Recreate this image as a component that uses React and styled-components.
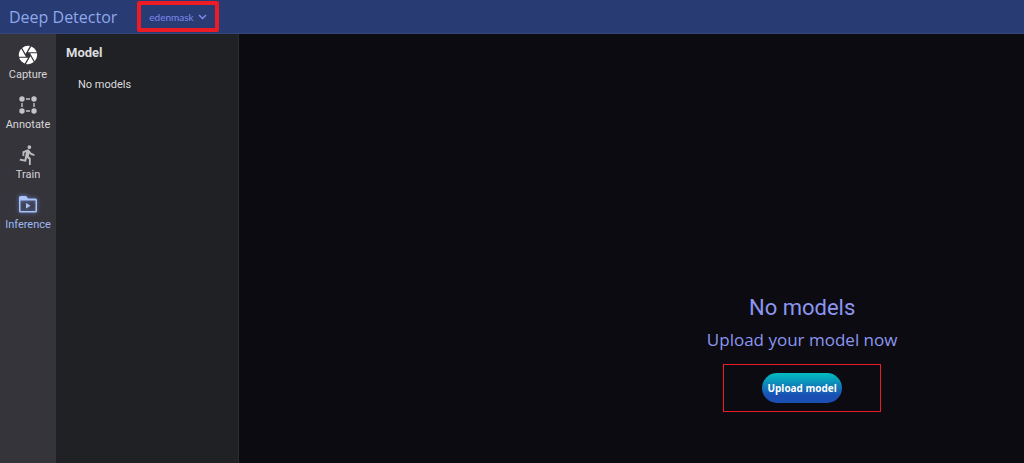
import React from "react";
import styled, { createGlobalStyle } from "styled-components";
import { MdCamera, MdDirectionsRun } from "react-icons/md";

const GlobalStyle = createGlobalStyle`
  * {
    box-sizing: border-box;
  }
  body {
    margin: 0;
    background-color: #0b0b11;
    font-family: "Open Sans", "Noto Sans", sans-serif;
  }
`;
const Page = styled.div`
  display: flex;
  flex-direction: column;
  min-height: 100vh;
`;
const Header = styled.header`
  display: flex;
  align-items: center;
  gap: 20px;
  height: 34px;
  padding-left: 9px;
  background-color: #293b73;
  border-bottom: 1px solid #33457c;
`;
const Logo = styled.h1`
  margin: 0;
  color: #8fa8ea;
  font-size: 16px;
  line-height: 24px;
  font-weight: normal;
`;
const Project = styled.label`
  display: flex;
  align-items: center;
  height: 31px;
  padding: 0 8px;
  color: #8088ee;
  border: 4px solid #ed1c24;
  border-radius: 2px;
`;
const Select = styled.select`
  appearance: none;
  width: 49px;
  padding: 0;
  color: inherit;
  background: none;
  border: none;
  outline: none;
  font-family: Lato, sans-serif;
  font-size: 10px;
  line-height: 16px;
`;
const Body = styled.div`
  display: flex;
  flex: 1;
`;
const Nav = styled.nav`
  display: flex;
  flex-direction: column;
  gap: 10px;
  width: 56px;
  padding-top: 10px;
  background-color: #35343a;
`;
const NavLink = styled.a`
  display: flex;
  flex-direction: column;
  align-items: center;
  color: ${props => props.$active ? "#9db8f5" : "#d6d6d8"};
  font-family: Roboto, sans-serif;
  font-size: 11px;
  line-height: 18px;
  text-decoration: none;
  svg {
    width: 22px;
    height: 22px;
    color: ${props => props.$icon};
    filter: ${props => props.$active ? "drop-shadow(0 0 2px #6d8be0)" : "none"};
  }
`;
const Sidebar = styled.aside`
  width: 183px;
  padding: 10px;
  color: #dcdcde;
  background-color: #202124;
  border-right: 1px solid #2c2c30;
`;
const SidebarTitle = styled.h2`
  margin: 0;
  font-family: Roboto, sans-serif;
  font-size: 13px;
  line-height: 18px;
  font-weight: bold;
`;
const Empty = styled.p`
  margin: 14px 0 0;
  padding-left: 12px;
  font-family: Roboto, sans-serif;
  font-size: 11px;
  line-height: 18px;
`;
const Main = styled.main`
  display: flex;
  flex: 1;
  flex-direction: column;
  align-items: center;
  padding: 258px 0 50px 33.33%;
  color: #8c96f0;
`;
const Title = styled.h2`
  margin: 0;
  font-family: Roboto, sans-serif;
  font-size: 22px;
  line-height: 32px;
  font-weight: normal;
`;
const Subtitle = styled.p`
  margin: 4px 0 12px;
  font-size: 17px;
  line-height: 24px;
`;
const Highlight = styled.div`
  padding: 8px 38px;
  border: 1px solid #ed1c24;
`;
const Button = styled.button`
  display: block;
  width: 80px;
  height: 30px;
  padding: 0;
  color: #fff;
  background: linear-gradient(#00bfc0, #1a4fb4 75%);
  border: none;
  border-radius: 15px;
  font-family: inherit;
  font-size: 10px;
  font-weight: bold;
  white-space: nowrap;
`;

const Chevron = () => (
    <svg width="9" height="6" viewBox="0 0 9 6" fill="none" stroke="currentColor" strokeWidth="1.5">
        <path d="M1 1l3.5 3.5L8 1"/>
    </svg>
);
const AnnotateIcon = () => (
    <svg viewBox="0 0 22 22" fill="currentColor">
        <circle cx="5" cy="5" r="2.7"/>
        <circle cx="17" cy="5" r="2.7"/>
        <circle cx="5" cy="17" r="2.7"/>
        <circle cx="17" cy="17" r="2.7"/>
        <path d="M9 4.3h4v1.4H9zM9 16.3h4v1.4H9zM4.3 9h1.4v4H4.3zM16.3 9h1.4v4h-1.4z"/>
    </svg>
);
const InferenceIcon = () => (
    <svg viewBox="0 0 22 22" fill="currentColor">
        <path fillRule="evenodd" d="M3.5 2H9l2 2.5h7.5A1.5 1.5 0 0 1 20 6v11a1.5 1.5 0 0 1-1.5 1.5h-15A1.5 1.5 0 0 1 2 17V3.5A1.5 1.5 0 0 1 3.5 2zM3.5 6.5V17h15V6.5z"/>
        <path d="M9 9v5.4l4.6-2.7z"/>
    </svg>
);

const links = [
    { name: "Capture", icon: <MdCamera/>, color: "#fff" },
    { name: "Annotate", icon: <AnnotateIcon/>, color: "#c4c4c8" },
    { name: "Train", icon: <MdDirectionsRun/>, color: "#bdbdc0" },
    { name: "Inference", icon: <InferenceIcon/>, color: "#a9c2f7", active: true }
];

const App = () => {
    return(
        <Page>
            <GlobalStyle/>
            <Header>
                <Logo>Deep Detector</Logo>
                <Project>
                    <Select aria-label="Project">
                        <option>edenmask</option>
                    </Select>
                    <Chevron/>
                </Project>
            </Header>
            <Body>
                <Nav>
                    {links.map(link => (
                        <NavLink key={link.name} href={"#" + link.name.toLowerCase()} $icon={link.color} $active={link.active}>
                            {link.icon}
                            {link.name}
                        </NavLink>
                    ))}
                </Nav>
                <Sidebar>
                    <SidebarTitle>Model</SidebarTitle>
                    <Empty>No models</Empty>
                </Sidebar>
                <Main>
                    <Title>No models</Title>
                    <Subtitle>Upload your model now</Subtitle>
                    <Highlight>
                        <Button type="button">Upload model</Button>
                    </Highlight>
                </Main>
            </Body>
        </Page>
    )
};
export default App
